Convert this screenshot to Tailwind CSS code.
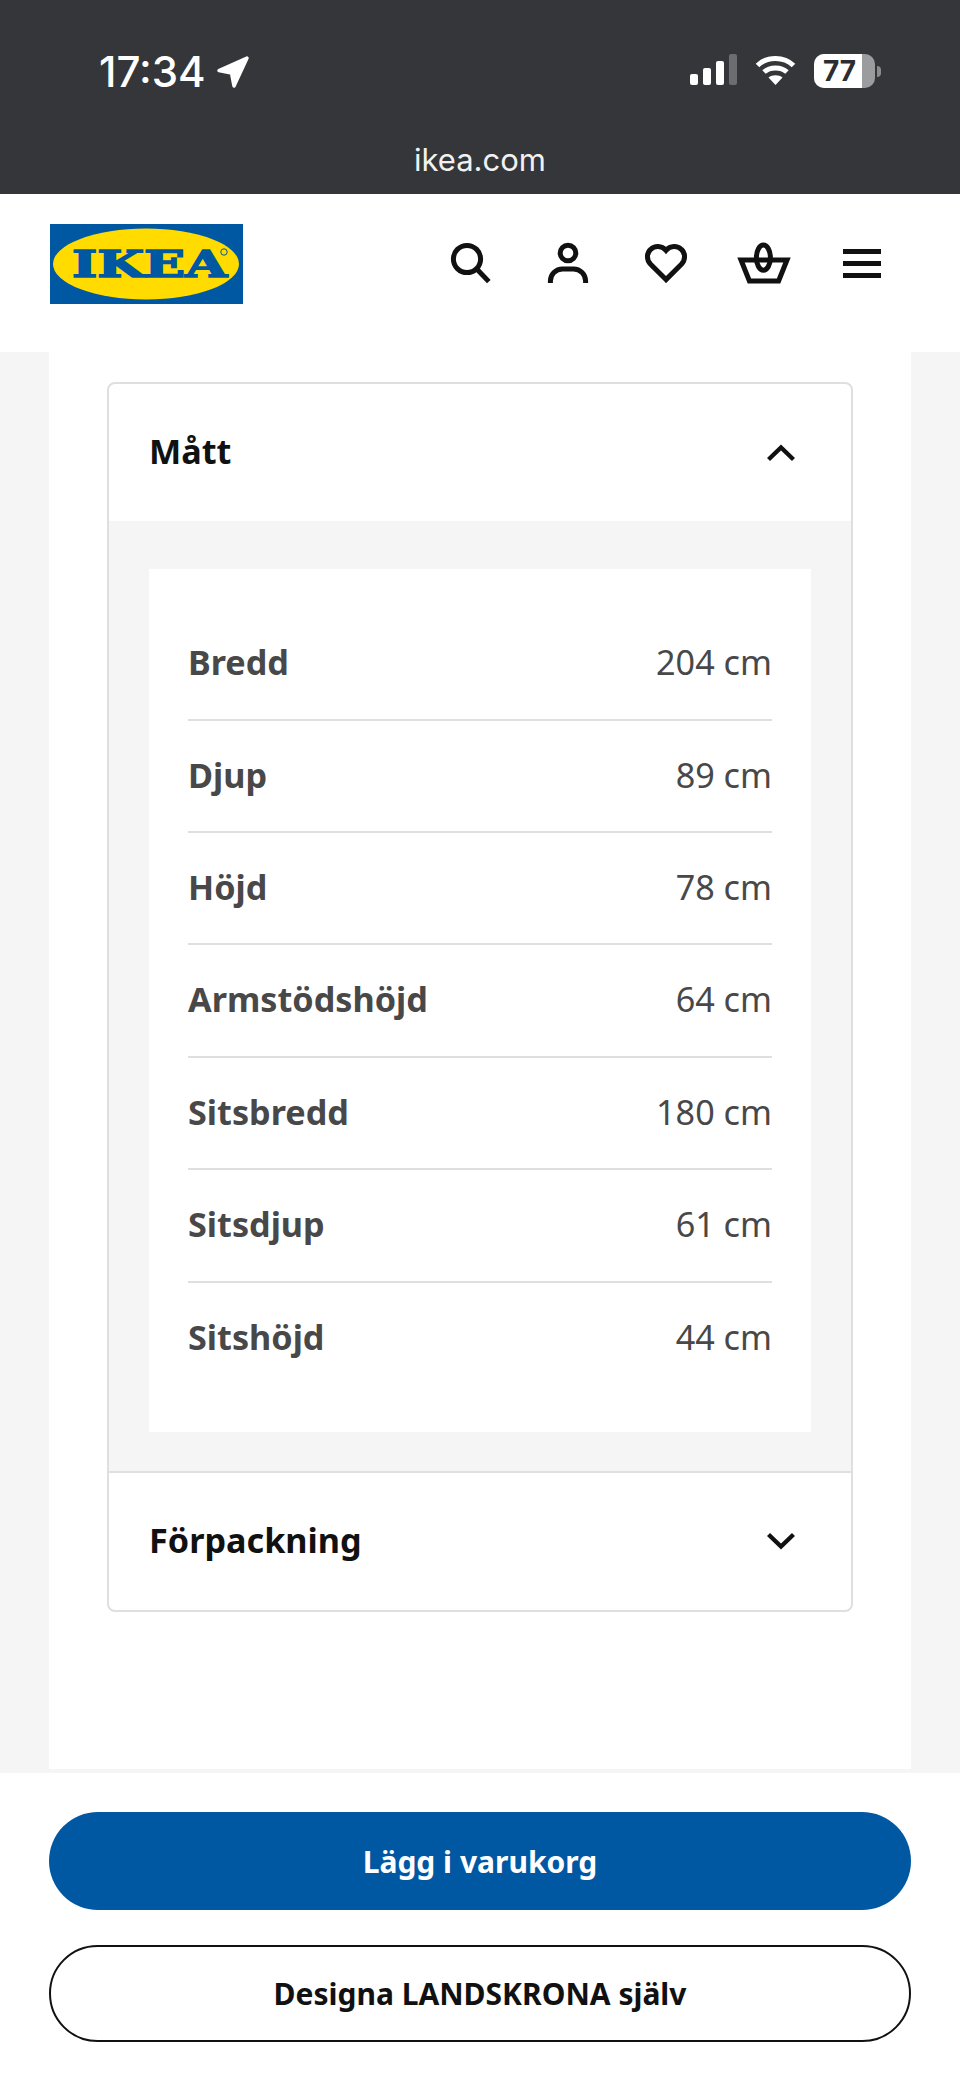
<!DOCTYPE html>
<html lang="sv">
<head>
    <meta charset="UTF-8">
    <meta name="viewport" content="width=device-width, initial-scale=1.0">
    <title>IKEA - Mått</title>
    <script src="https://cdn.jsdelivr.net/npm/@tailwindcss/browser@4"></script>
</head>
<body class="bg-white">
    <div class="w-[960px] h-[2081px] overflow-hidden flex flex-col font-['Noto_Sans',sans-serif]">
        <!-- Phone status bar -->
        <div class="h-[194px] shrink-0 bg-[#34363a] text-white flex flex-col font-['Inter',sans-serif]">
            <div class="h-[142px] flex justify-between pl-[99px] pr-[79px] pt-[48px]">
                <div class="flex items-start gap-[10px]">
                    <span class="text-[42px] leading-[48px] font-medium">17:34</span>
                    <svg class="w-[34px] h-[34px] mt-[7px]" viewBox="0 0 34 34"><path d="M31 3 L3 15.5 L15.5 18 L18 31 Z" fill="#fff" stroke="#fff" stroke-width="3.5" stroke-linejoin="round"/></svg>
                </div>
                <div class="flex items-start gap-[18px] pt-[6px]">
                    <div class="flex items-end gap-[5px] h-[31px]">
                        <div class="w-[8px] h-[11px] rounded-[2px] bg-white"></div>
                        <div class="w-[8px] h-[17px] rounded-[2px] bg-white"></div>
                        <div class="w-[8px] h-[24px] rounded-[2px] bg-white"></div>
                        <div class="w-[8px] h-[31px] rounded-[2px] bg-[#6c6d70]"></div>
                    </div>
                    <svg class="w-[41px] h-[31px]" viewBox="0 0 41 31" fill="none" stroke="#fff" stroke-width="5">
                        <path d="M2.5 11.5 C12 2 29 2 38.5 11.5"/>
                        <path d="M9 18 C15 12.5 26 12.5 32 18"/>
                        <path d="M20.5 31 L13.5 23.5 C17 20.5 24 20.5 27.5 23.5 Z" fill="#fff" stroke="none"/>
                    </svg>
                    <div class="flex items-center gap-[2px]">
                        <div class="w-[61px] h-[34px] rounded-[10px] overflow-hidden bg-[#9b9c9e] flex">
                            <div class="w-[48px] h-full bg-white text-[#2b2d30] text-[28px] leading-[34px] font-bold text-center pl-[3px]">77</div>
                        </div>
                        <div class="w-[4px] h-[11px] rounded-r-full bg-[#8b8c8e]"></div>
                    </div>
                </div>
            </div>
            <div class="text-center text-[31px] leading-[40px] text-[#f1f1f1] -mt-[2px]">ikea.com</div>
        </div>

        <!-- Site header -->
        <header class="h-[158px] shrink-0 bg-white flex items-start justify-between pl-[50px] pr-[74px]">
            <svg class="w-[193px] h-[80px] mt-[30px]" viewBox="0 0 193 80">
                <rect width="193" height="80" fill="#0058a3"/>
                <ellipse cx="96" cy="40" rx="93" ry="35.5" fill="#ffdb00"/>
                <text x="22" y="53" font-family="DejaVu Serif" font-weight="bold" font-size="38" textLength="155" lengthAdjust="spacingAndGlyphs" fill="#0058a3" stroke="#0058a3" stroke-width="1.6">IKEA</text>
                <circle cx="174" cy="28" r="3.2" fill="none" stroke="#0058a3" stroke-width="1"/>
            </svg>
            <nav class="flex gap-[50px] mt-[45px]">
                <svg class="w-[48px] h-[48px]" viewBox="0 0 24 24" fill="none" stroke="#111" stroke-width="2.5">
                    <circle cx="10.5" cy="10" r="6.8"/>
                    <path d="M15.4 15 L21.4 21.3"/>
                </svg>
                <svg class="w-[48px] h-[48px]" viewBox="0 0 24 24" fill="none" stroke="#111" stroke-width="2.5">
                    <circle cx="12" cy="7" r="3.9"/>
                    <path d="M3.2 22 v-1 a6 6 0 0 1 6-6 h5.6 a6 6 0 0 1 6 6 v1"/>
                </svg>
                <svg class="w-[48px] h-[48px]" viewBox="0 0 24 24" fill="none" stroke="#111" stroke-width="2.5">
                    <path d="M12 20.3 L4.3 12.6 C2.2 10.4 2.2 7.2 4.3 5.2 C6.3 3.2 9.8 3.1 12 5.7 C14.2 3.1 17.7 3.2 19.7 5.2 C21.8 7.2 21.8 10.4 19.7 12.6 Z"/>
                </svg>
                <svg class="w-[48px] h-[48px] overflow-visible" viewBox="0 0 24 24" fill="none" stroke="#111" stroke-width="2.5">
                    <path d="M0.5 10.5 H23.5 L19.3 21 H4.7 Z"/>
                    <ellipse cx="11.7" cy="9.3" rx="3.5" ry="6.3"/>
                </svg>
                <div class="w-[48px] h-[48px] flex flex-col justify-center gap-[7px] px-[5px]">
                    <div class="h-[5px] bg-[#111]"></div>
                    <div class="h-[5px] bg-[#111]"></div>
                    <div class="h-[5px] bg-[#111]"></div>
                </div>
            </nav>
        </header>

        <!-- Product details -->
        <main class="h-[1421px] shrink-0 bg-[#f5f5f5] px-[49px] pb-[4px]">
            <div class="h-full bg-white pt-[30px] px-[58px]">
                <div class="border-2 border-[#dfdfdf] rounded-[8px] overflow-hidden">
                    <div class="h-[137px] flex items-center justify-between pl-[40px] pr-[56px]">
                        <h2 class="text-[34.2px] font-bold text-[#111] -mt-[4px]">Mått</h2>
                        <svg class="w-[28px] h-[18px]" viewBox="0 0 28 18" fill="none" stroke="#111" stroke-width="4.4"><path d="M1.5 15.5 L14 3.5 L26.5 15.5"/></svg>
                    </div>
                    <div class="bg-[#f5f5f5] pt-[48px] pb-[39px] pl-[40px] pr-[40px]">
                        <div class="bg-white px-[39px] pt-[38px] pb-[37px] text-[#484848] text-[34.2px]">
                            <div class="h-[114px] pb-[3px] flex items-center justify-between border-b-2 border-[#dfdfdf]"><span class="font-bold">Bredd</span><span>204 cm</span></div>
                            <div class="h-[112px] pb-[3px] flex items-center justify-between border-b-2 border-[#dfdfdf]"><span class="font-bold">Djup</span><span>89 cm</span></div>
                            <div class="h-[112px] pb-[3px] flex items-center justify-between border-b-2 border-[#dfdfdf]"><span class="font-bold">Höjd</span><span>78 cm</span></div>
                            <div class="h-[113px] pb-[3px] flex items-center justify-between border-b-2 border-[#dfdfdf]"><span class="font-bold">Armstödshöjd</span><span>64 cm</span></div>
                            <div class="h-[112px] pb-[3px] flex items-center justify-between border-b-2 border-[#dfdfdf]"><span class="font-bold">Sitsbredd</span><span>180 cm</span></div>
                            <div class="h-[113px] pb-[3px] flex items-center justify-between border-b-2 border-[#dfdfdf]"><span class="font-bold">Sitsdjup</span><span>61 cm</span></div>
                            <div class="h-[112px] pb-[5px] flex items-center justify-between"><span class="font-bold">Sitshöjd</span><span>44 cm</span></div>
                        </div>
                    </div>
                    <div class="h-[139px] border-t-2 border-[#dfdfdf] flex items-center justify-between pl-[40px] pr-[56px]">
                        <h2 class="text-[34.2px] font-bold text-[#111] -mt-[4px]">Förpackning</h2>
                        <svg class="w-[28px] h-[18px] -mt-[2px]" viewBox="0 0 28 18" fill="none" stroke="#111" stroke-width="4.4"><path d="M1.5 2.5 L14 14.5 L26.5 2.5"/></svg>
                    </div>
                </div>
            </div>
        </main>

        <!-- Sticky actions -->
        <div class="flex-1 bg-white px-[49px] pt-[39px] flex flex-col gap-[35px]">
            <button class="h-[98px] rounded-full bg-[#0058a3] text-white text-[30px] font-bold">Lägg i varukorg</button>
            <button class="h-[97px] rounded-full border-2 border-[#111] bg-white text-[#111] text-[30px] font-bold">Designa LANDSKRONA själv</button>
        </div>
    </div>
</body>
</html>
